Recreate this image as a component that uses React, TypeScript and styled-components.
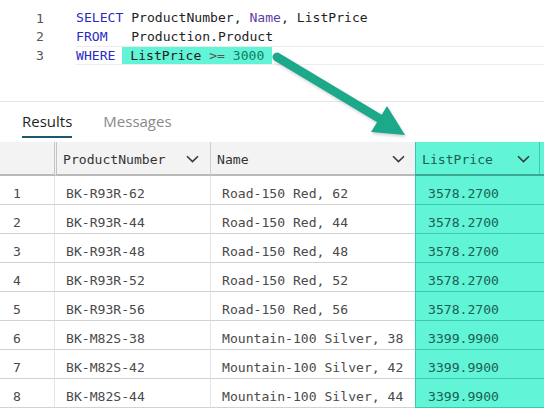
import React from "react";
import styled, { createGlobalStyle } from "styled-components";

const Global = createGlobalStyle`
  html, body { margin: 0; padding: 0; background: #fff; }
  #root { width: 544px; height: 410px; }
`;

const MONO = `"DejaVu Sans Mono", "Liberation Mono", monospace`;
const AQUA = "#62f4d7";
const AQUA_BORDER = "#3cc8ae";

const Page = styled.div`
  position: relative;
  width: 544px;
  height: 410px;
  overflow: hidden;
  background: #fff;
  font-family: ${MONO};
`;

const Editor = styled.div`
  height: 102px;
  box-sizing: border-box;
  padding-top: 9px;
  border-bottom: 1px solid #e6e6e6;
  font-size: 13.1px;
`;

const Line = styled.div`
  display: flex;
  align-items: center;
  height: 18.5px;
  white-space: pre;
`;

const LineNo = styled.span`
  width: 44px;
  padding-right: 32px;
  text-align: right;
  color: #555;
  flex: none;
`;

const Code = styled.span<{ $current?: boolean }>`
  flex: 1;
  display: block;
  height: 18.5px;
  line-height: 16.5px;
  box-sizing: border-box;
  white-space: pre;
  color: #1e1e1e;
  border-top: 1px solid ${(p) => (p.$current ? "#ececec" : "transparent")};
  border-bottom: 1px solid ${(p) => (p.$current ? "#ececec" : "transparent")};
`;

const Kw = styled.span`
  color: #2b2bc4;
`;
const Fn = styled.span`
  color: #5a3fa8;
`;
const Op = styled.span`
  color: #555;
`;
const Num = styled.span`
  color: #0f7b62;
`;

const Mark = styled.span`
  display: inline-block;
  line-height: 17px;
  margin-left: -1px;
  padding: 0 8px 0 8px;
  background: ${AQUA};
`;

const Tabs = styled.div`
  display: flex;
  gap: 31px;
  height: 40px;
  padding-left: 22px;
  font-family: "Open Sans", "Noto Sans", sans-serif;
  font-size: 15px;
`;

const Tab = styled.div<{ $active?: boolean }>`
  display: flex;
  align-items: center;
  height: 36px;
  box-sizing: border-box;
  padding-top: 4px;
  color: ${(p) => (p.$active ? "#1f1f1f" : "#8a8a8a")};
  border-bottom: 2px solid ${(p) => (p.$active ? "#1d5670" : "transparent")};
`;

const Grid = styled.div`
  display: grid;
  grid-template-columns: 54px 156px 205px 1fr;
  font-size: 13.1px;
`;

const HeadCell = styled.div<{ $sel?: boolean; $divider?: "double" | "single" | "none" }>`
  display: flex;
  align-items: center;
  justify-content: space-between;
  height: 34px;
  box-sizing: border-box;
  padding: 2px 11px 0 6px;
  background: ${(p) => (p.$sel ? AQUA : "#f3f3f3")};
  color: ${(p) => (p.$sel ? "#1d5f53" : "#333")};
  border-bottom: 2px solid ${(p) => (p.$sel ? "#3aa994" : "#b9b9b9")};
  border-left: ${(p) =>
    p.$divider === "double"
      ? "3px double #c4c4c4"
      : p.$divider === "single"
      ? "1px solid #cfcfcf"
      : "none"};
  box-shadow: ${(p) => (p.$sel ? `inset 1px 0 0 ${AQUA_BORDER}, inset -4px 0 0 ${AQUA}, inset -5px 0 0 ${AQUA_BORDER}` : "none")};
`;

const Cell = styled.div<{ $sel?: boolean; $pad: number; $divider?: boolean }>`
  display: flex;
  align-items: center;
  height: 29px;
  box-sizing: border-box;
  padding: 7px 0 0 ${(p) => p.$pad}px;
  white-space: pre;
  color: ${(p) => (p.$sel ? "#1b5e52" : "#4a4a4a")};
  background: ${(p) => (p.$sel ? AQUA : "#fff")};
  border-bottom: 1px solid ${(p) => (p.$sel ? AQUA_BORDER : "#d2d2d2")};
  border-left: ${(p) =>
    p.$sel ? `1px solid ${AQUA_BORDER}` : p.$divider ? "1px solid #e4e4e4" : "none"};
`;

const Chevron = () => (
  <svg width="13" height="8" viewBox="0 0 13 8" fill="none">
    <path d="M1 1.2 L6.5 6.6 L12 1.2" stroke="#3a3a3a" strokeWidth="1.6" />
  </svg>
);

const ArrowLayer = styled.svg`
  position: absolute;
  left: 0;
  top: 0;
  pointer-events: none;
  filter: drop-shadow(1px 2px 1.5px rgba(0, 0, 0, 0.18));
`;

const rows: [string, string, string][] = [
  ["BK-R93R-62", "Road-150 Red, 62", "3578.2700"],
  ["BK-R93R-44", "Road-150 Red, 44", "3578.2700"],
  ["BK-R93R-48", "Road-150 Red, 48", "3578.2700"],
  ["BK-R93R-52", "Road-150 Red, 52", "3578.2700"],
  ["BK-R93R-56", "Road-150 Red, 56", "3578.2700"],
  ["BK-M82S-38", "Mountain-100 Silver, 38", "3399.9900"],
  ["BK-M82S-42", "Mountain-100 Silver, 42", "3399.9900"],
  ["BK-M82S-44", "Mountain-100 Silver, 44", "3399.9900"],
];

export default function App() {
  return (
    <Page>
      <Global />
      <Editor>
        <Line>
          <LineNo>1</LineNo>
          <Code>
            <Kw>SELECT</Kw>{" ProductNumber, "}<Fn>Name</Fn>{", ListPrice"}
          </Code>
        </Line>
        <Line>
          <LineNo>2</LineNo>
          <Code>
            <Kw>FROM</Kw>{"   Production.Product"}
          </Code>
        </Line>
        <Line>
          <LineNo>3</LineNo>
          <Code $current>
            <Kw>WHERE</Kw>{" "}
            <Mark>
              {"ListPrice "}<Op>&gt;=</Op>{" "}<Num>3000</Num>
            </Mark>
          </Code>
        </Line>
      </Editor>
      <Tabs>
        <Tab $active>Results</Tab>
        <Tab>Messages</Tab>
      </Tabs>
      <Grid>
        <HeadCell $divider="none" />
        <HeadCell $divider="double">
          ProductNumber <Chevron />
        </HeadCell>
        <HeadCell $divider="single" style={{ paddingRight: 10 }}>
          Name <Chevron />
        </HeadCell>
        <HeadCell $sel $divider="none" style={{ paddingLeft: 7, paddingRight: 14 }}>
          ListPrice <Chevron />
        </HeadCell>
        {rows.map((r, i) => (
          <React.Fragment key={i}>
            <Cell $pad={13}>{i + 1}</Cell>
            <Cell $pad={11} $divider>
              {r[0]}
            </Cell>
            <Cell $pad={11} $divider>
              {r[1]}
            </Cell>
            <Cell $pad={12} $sel>
              {r[2]}
            </Cell>
          </React.Fragment>
        ))}
      </Grid>
      <ArrowLayer width="544" height="410" viewBox="0 0 544 410">
        <line
          x1="277"
          y1="57"
          x2="382"
          y2="120"
          stroke="#1ca98a"
          strokeWidth="9"
          strokeLinecap="round"
        />
        <polygon points="405,135 387,106 371,132" fill="#1ca98a" />
      </ArrowLayer>
    </Page>
  );
}
